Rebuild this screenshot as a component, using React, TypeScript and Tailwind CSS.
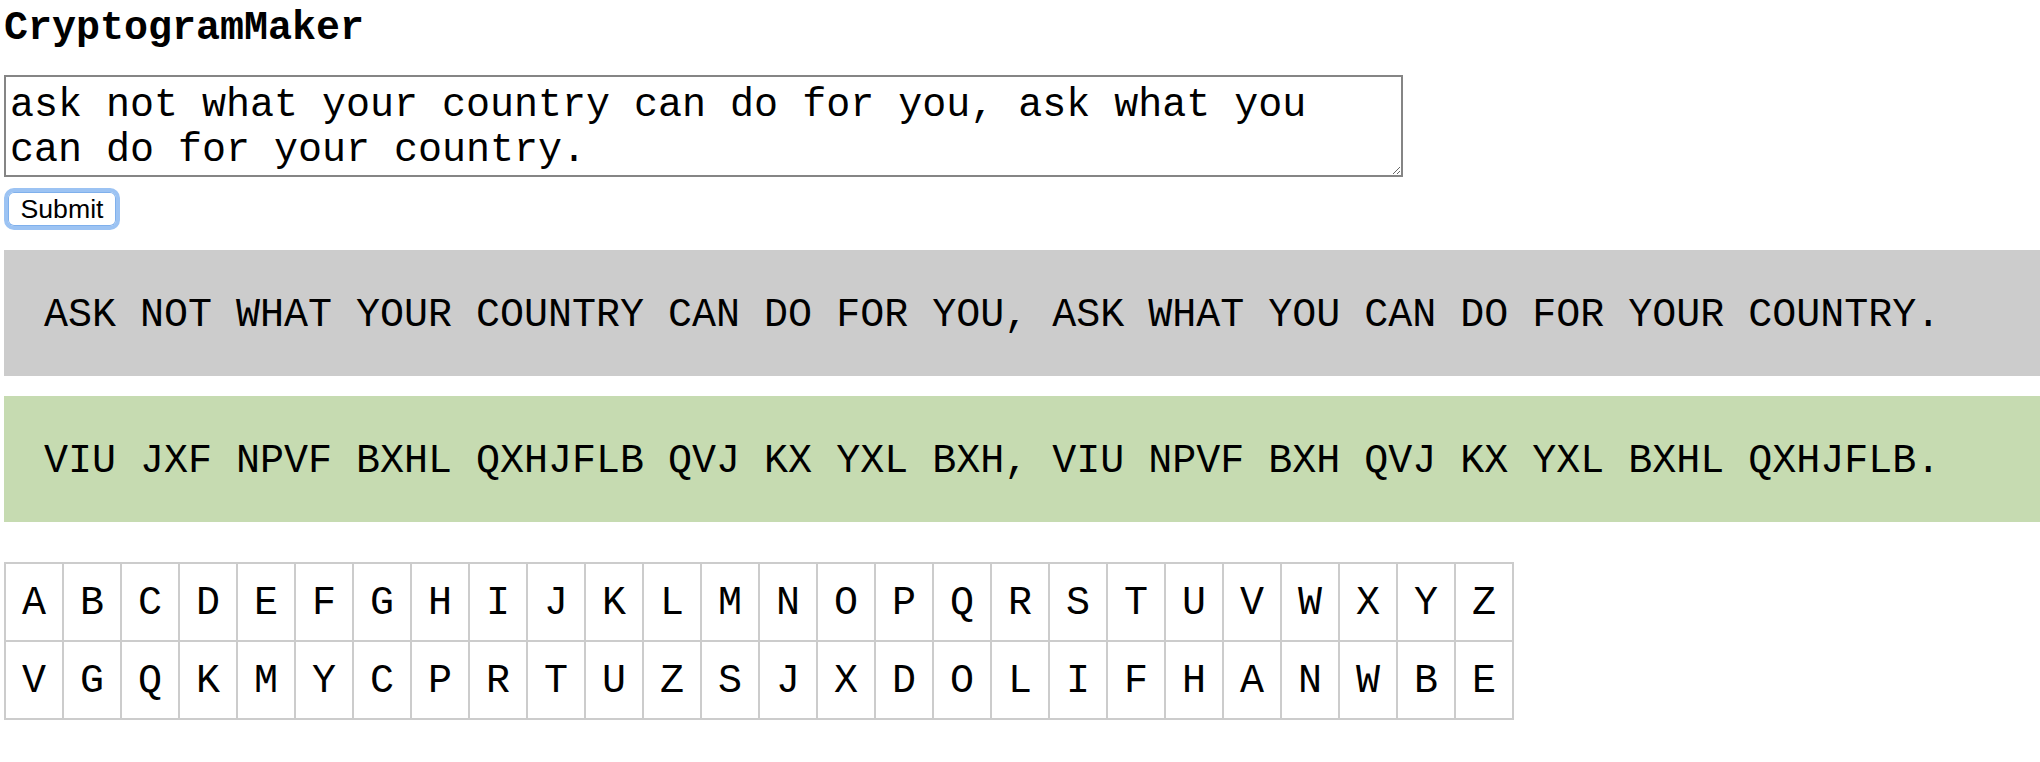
import React from 'react';

const plain = 'ASK NOT WHAT YOUR COUNTRY CAN DO FOR YOU, ASK WHAT YOU CAN DO FOR YOUR COUNTRY.';
const cipher = 'VIU JXF NPVF BXHL QXHJFLB QVJ KX YXL BXH, VIU NPVF BXH QVJ KX YXL BXHL QXHJFLB.';
const alphabet = 'ABCDEFGHIJKLMNOPQRSTUVWXYZ'.split('');
const key = 'VGQKMYCPRTUZSJXDOLIFHANWBE'.split('');

const App: React.FC = () => {
  return (
    <div className="pl-[4px] pt-[6px] font-['Liberation_Mono','Courier_New',monospace] text-black bg-white min-h-[762px]">
      <div className="text-[40px] font-bold leading-[45px]">CryptogramMaker</div>

      <textarea
        className="block mt-[24px] w-[1399px] h-[102px] border-2 border-[#858585] pt-[6px] pb-[2px] px-[4px] text-[40px] leading-[45px] font-['Liberation_Mono','Courier_New',monospace] text-black outline-none"
        defaultValue="ask not what your country can do for you, ask what you can do for your country."
      />

      <button className="block mt-[11px] w-[116px] h-[42px] rounded-[10px] border-[4px] border-[#9cc3f3] bg-white shadow-[inset_0_0_0_1px_#7fb0ec] font-['Liberation_Sans',Arial,sans-serif] text-[26.67px] leading-none text-black">
        Submit
      </button>

      <div className="mt-[20px] bg-[#cccccc] pt-[43px] pb-[37px] px-[40px] text-[40px] leading-[46px] whitespace-nowrap">{plain}</div>
      <div className="mt-[20px] bg-[#c6dbb1] pt-[43px] pb-[37px] px-[40px] text-[40px] leading-[46px] whitespace-nowrap">{cipher}</div>

      <div className="mt-[40px] inline-grid grid-cols-[repeat(26,58px)] border-l-2 border-t-2 border-[#cccccc] text-[40px]">
        {alphabet.map((ch) => (
          <div key={'a' + ch} className="h-[78px] pt-[4px] border-r-2 border-b-2 border-[#cccccc] flex items-center justify-center">
            {ch}
          </div>
        ))}
        {key.map((ch, i) => (
          <div key={'k' + i} className="h-[78px] pt-[4px] border-r-2 border-b-2 border-[#cccccc] flex items-center justify-center">
            {ch}
          </div>
        ))}
      </div>
    </div>
  );
};

export default App;
